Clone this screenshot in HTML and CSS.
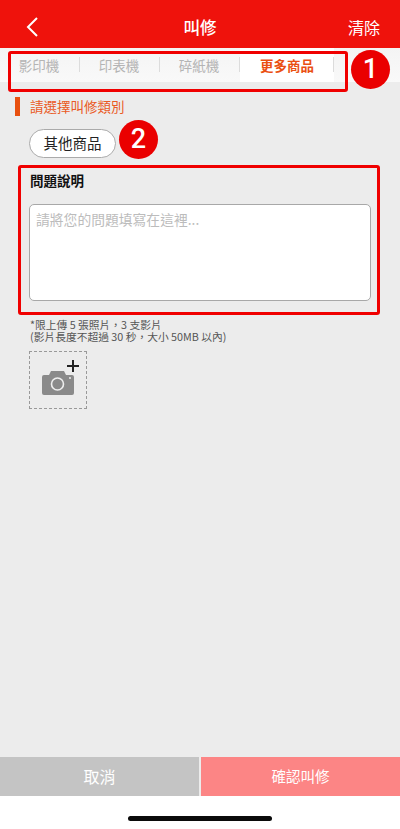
FILE: index.html
```html
<!DOCTYPE html>
<html lang="zh-Hant">
<head>
    <meta charset="UTF-8">
    <meta name="viewport" content="width=device-width, initial-scale=1.0">
    <title>叫修</title>
    <link rel="stylesheet" href="styles.css">
</head>
<body>
    <div class="page">
        <header class="topbar">
            <svg class="back-icon" width="14" height="22" viewBox="0 0 14 22"><path d="M12 2 L3 11 L12 20" fill="none" stroke="#fff" stroke-width="2"/></svg>
            <div class="topbar-title">叫修</div>
            <div class="topbar-clear">清除</div>
        </header>

        <div class="tabs">
            <div class="tab">影印機</div>
            <div class="tab">印表機</div>
            <div class="tab">碎紙機</div>
            <div class="tab tab-active">更多商品</div>
        </div>

        <main class="content">
            <div class="section-title">請選擇叫修類別</div>
            <div class="pill">其他商品</div>
            <div class="field-label">問題說明</div>
            <div class="textarea">請將您的問題填寫在這裡...</div>
            <p class="note">*限上傳 5 張照片，3 支影片<br>(影片長度不超過 30 秒，大小 50MB 以內)</p>
            <div class="upload">
                <svg width="56" height="56" viewBox="1 1 56 56">
                    <path d="M15 24 H20 L22 20 H35 L37 24 H43 Q45 24 45 26 V42 Q45 44 43 44 H15 Q13 44 13 42 V26 Q13 24 15 24 Z" fill="#8a8a8a"/>
                    <circle cx="28.500" cy="33" r="6" fill="none" stroke="#eee" stroke-width="1.600"/>
                    <circle cx="41" cy="27" r="1" fill="#eee"/>
                    <path d="M44 9 V21 M38 15 H50" stroke="#222" stroke-width="2" fill="none"/>
                </svg>
            </div>
        </main>

        <footer class="actions">
            <div class="btn btn-cancel">取消</div>
            <div class="btn btn-confirm">確認叫修</div>
        </footer>
        <div class="home-area"><div class="home-bar"></div></div>

        <!-- annotations over the screenshot -->
        <div class="mark mark-tabs"></div>
        <div class="mark mark-field"></div>
        <div class="badge badge-one">1</div>
        <div class="badge badge-two">2</div>
    </div>
</body>
</html>
```

FILE: styles.css
```css
* {
    box-sizing: border-box;
}
body {
    margin: 0;
    font-family: "Noto Sans CJK TC", "Liberation Sans", sans-serif;
    background-color: #ececec;
}
.page {
    position: relative;
    width: 400px;
    height: 829px;
    display: flex;
    flex-direction: column;
    overflow: hidden;
}
.topbar {
    height: 48px;
    flex: none;
    display: flex;
    align-items: center;
    justify-content: space-between;
    padding: 6px 20px 0 25px;
    background-color: #ef120c;
    color: white;
    position: relative;
}
.topbar-title {
    position: absolute;
    left: 0;
    right: 0;
    top: 17px;
    text-align: center;
    font-size: 16.500px;
    font-weight: 500;
    line-height: 20px;
}
.topbar-clear {
    font-size: 16px;
    line-height: 20px;
}
.tabs {
    height: 34px;
    flex: none;
    display: flex;
    width: 400px;
    background: linear-gradient(#f4f4f4, #f9f9f9);
    padding-right: 66px;
}
.tab {
    width: 80px;
    height: 34px;
    padding: 7px 2px 0 0;
    font-size: 13.500px;
    line-height: 20px;
    text-align: center;
    color: #b4b4b4;
    position: relative;
}
.tab::after {
    content: "";
    position: absolute;
    right: 0;
    top: 9px;
    height: 15px;
    width: 1px;
    background-color: #dcdcdc;
}
.tab-active {
    width: 94px;
    padding-right: 0;
    background-color: white;
    color: #ea4f12;
    font-weight: 700;
}
.content {
    flex: 1;
    padding: 15px 29px 0;
}
.section-title {
    position: relative;
    height: 19px;
    font-size: 13.500px;
    line-height: 18px;
    color: #ea5a24;
    padding-left: 1px;
}
.section-title::before {
    content: "";
    position: absolute;
    left: -14px;
    top: 0;
    width: 5px;
    height: 19px;
    background-color: #e8500f;
}
.pill {
    margin-top: 13px;
    width: 87px;
    height: 29px;
    border: 1px solid #aaa;
    border-radius: 15px;
    background-color: white;
    font-size: 14.500px;
    line-height: 26px;
    text-align: center;
    color: #222;
}
.field-label {
    margin-top: 12px;
    font-size: 13.500px;
    line-height: 20px;
    font-weight: 700;
    padding-left: 1px;
    color: #111;
}
.textarea {
    margin-top: 14px;
    width: 342px;
    height: 97px;
    border: 1px solid #a8a8a8;
    border-radius: 5px;
    background-color: white;
    padding: 4px 6px;
    font-size: 13.800px;
    line-height: 20px;
    color: #bcbcbc;
}
.note {
    margin: 18px 0 0;
    padding-left: 1px;
    font-size: 10.750px;
    line-height: 12px;
    color: #555;
}
.upload {
    margin-top: 8px;
    width: 58px;
    height: 58px;
    border: 1px dashed #999;
}
.upload svg {
    display: block;
}
.actions {
    height: 39px;
    flex: none;
    display: flex;
}
.btn {
    font-size: 14.500px;
    line-height: 38px;
    text-align: center;
    color: white;
}
.btn-cancel {
    width: 199px;
    background-color: #c4c4c4;
    font-size: 16px;
}
.btn-confirm {
    flex: 1;
    margin-left: 2px;
    background-color: #fc8585;
}
.home-area {
    height: 33px;
    flex: none;
    background-color: white;
    padding-top: 20px;
}
.home-bar {
    width: 144px;
    height: 5px;
    margin: 0 auto;
    border-radius: 3px;
    background-color: #0a0a0a;
}
.mark {
    position: absolute;
    border: 3px solid #f00000;
    border-radius: 3px;
}
.mark-tabs {
    left: 8px;
    top: 51px;
    width: 340px;
    height: 41px;
}
.mark-field {
    left: 18px;
    top: 165px;
    width: 362px;
    height: 150px;
}
.badge {
    position: absolute;
    width: 39px;
    height: 39px;
    border-radius: 50%;
    background-color: #ea0000;
    color: white;
    font-family: Roboto, sans-serif;
    font-size: 27px;
    font-weight: 500;
    line-height: 39px;
    text-align: center;
}
.badge-one {
    left: 351px;
    top: 50px;
}
.badge-two {
    left: 119px;
    top: 120px;
}
```
